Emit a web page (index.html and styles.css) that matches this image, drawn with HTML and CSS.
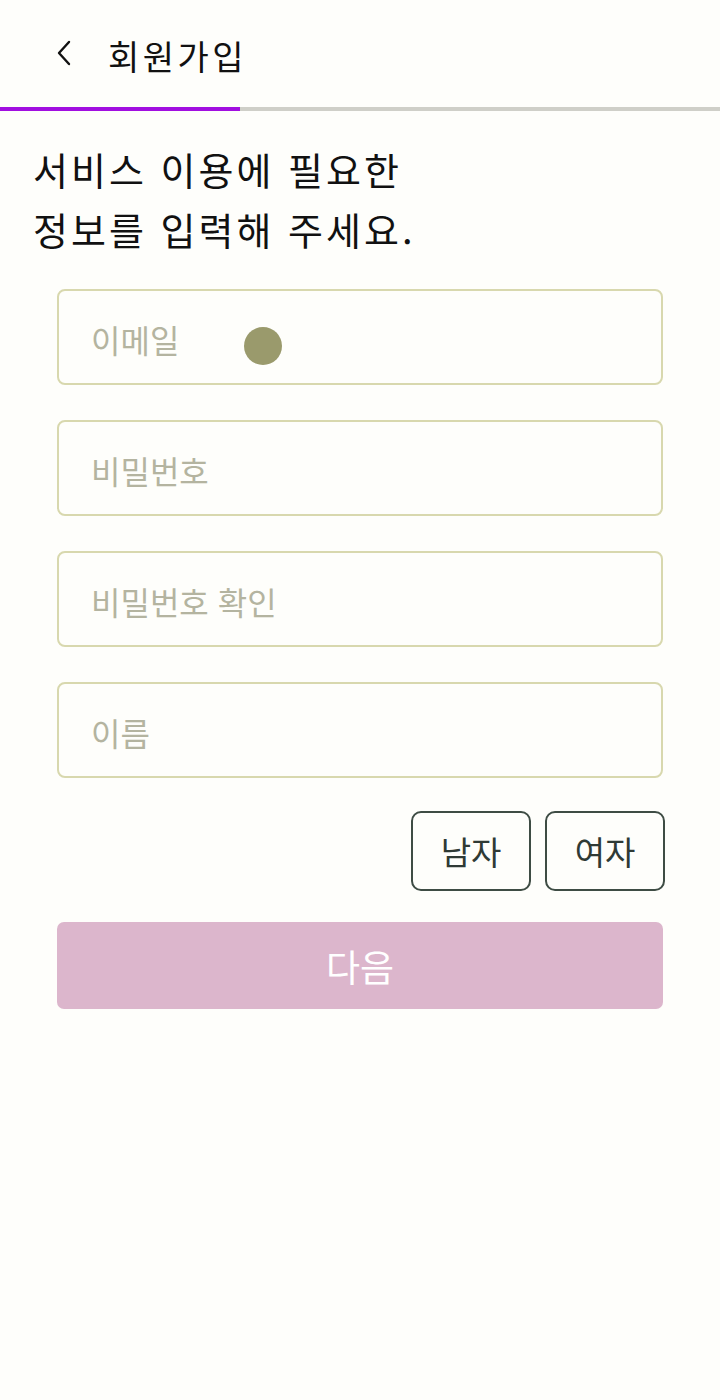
FILE: index.html
```html
<!DOCTYPE html>
<html lang="ko">
<head>
<meta charset="utf-8">
<title>회원가입</title>
<link rel="stylesheet" href="styles.css">
</head>
<body>
<header class="topbar">
  <button class="back" aria-label="뒤로">
    <svg width="16" height="26" viewBox="0 0 16 26"><path d="M13 2 L3 13 L13 24" fill="none" stroke="#111" stroke-width="2.4" stroke-linecap="round" stroke-linejoin="round"/></svg>
  </button>
  <h1 class="title">회원가입</h1>
</header>
<div class="progress"><div class="progress-fill"></div></div>
<main class="content">
  <h2 class="heading">서비스 이용에 필요한<br>정보를 입력해 주세요.</h2>
  <form class="form">
    <div class="field-wrap">
      <input class="field" type="email" placeholder="이메일">
      <span class="touch"></span>
    </div>
    <input class="field" type="password" placeholder="비밀번호">
    <input class="field" type="password" placeholder="비밀번호 확인">
    <input class="field" type="text" placeholder="이름">
    <div class="gender">
      <button type="button" class="gbtn">남자</button>
      <button type="button" class="gbtn">여자</button>
    </div>
    <button type="button" class="next">다음</button>
  </form>
</main>
</body>
</html>
```
FILE: styles.css
```css
* { box-sizing: border-box; }
html, body {
  margin: 0;
  background: #fefefb;
  font-family: "Noto Sans CJK KR", "Noto Sans", sans-serif;
  color: #111;
}
.topbar {
  height: 107px;
  display: flex;
  align-items: center;
  padding: 10px 0 0 56px;
  gap: 36px;
}
.back {
  border: 0;
  background: none;
  padding: 0;
  display: flex;
  margin-bottom: 12px;
}
.title {
  margin: 0 0 6px;
  font-size: 34px;
  font-weight: 400;
  letter-spacing: 3.5px;
}
.progress {
  height: 4px;
  background: #cfcfc8;
}
.progress-fill {
  width: 240px;
  height: 100%;
  background: #a10fe0;
}
.content {
  padding: 28px 57px 0 33px;
}
.heading {
  margin: 0;
  font-size: 38px;
  line-height: 60px;
  font-weight: 400;
  letter-spacing: 3px;
}
.form {
  margin: 30px 0 0 24px;
  display: flex;
  flex-direction: column;
  gap: 35px;
}
.field-wrap { position: relative; display: flex; }
.field {
  width: 100%;
  height: 96px;
  border: 2px solid #d8d8ae;
  border-radius: 8px;
  background: transparent;
  padding: 4px 32px 0;
  font-family: inherit;
  font-size: 32px;
  color: #111;
  outline: none;
}
.field::placeholder { color: #b4b4a0; }
.touch {
  position: absolute;
  left: 187px;
  top: 38px;
  width: 38px;
  height: 38px;
  border-radius: 50%;
  background: #9a9a6c;
}
.gender {
  display: flex;
  justify-content: flex-end;
  gap: 14px;
  margin: -2px -2px 0 0;
}
.gbtn {
  width: 120px;
  height: 80px;
  border: 2px solid #3e4c44;
  border-radius: 10px;
  background: transparent;
  font-family: inherit;
  font-size: 33px;
  color: #2f3a35;
}
.next {
  height: 87px;
  margin-top: -4px;
  border: 0;
  border-radius: 7px;
  background: #dcb6cc;
  color: #fff;
  font-family: inherit;
  font-size: 37px;
  font-weight: 400;
}
```
